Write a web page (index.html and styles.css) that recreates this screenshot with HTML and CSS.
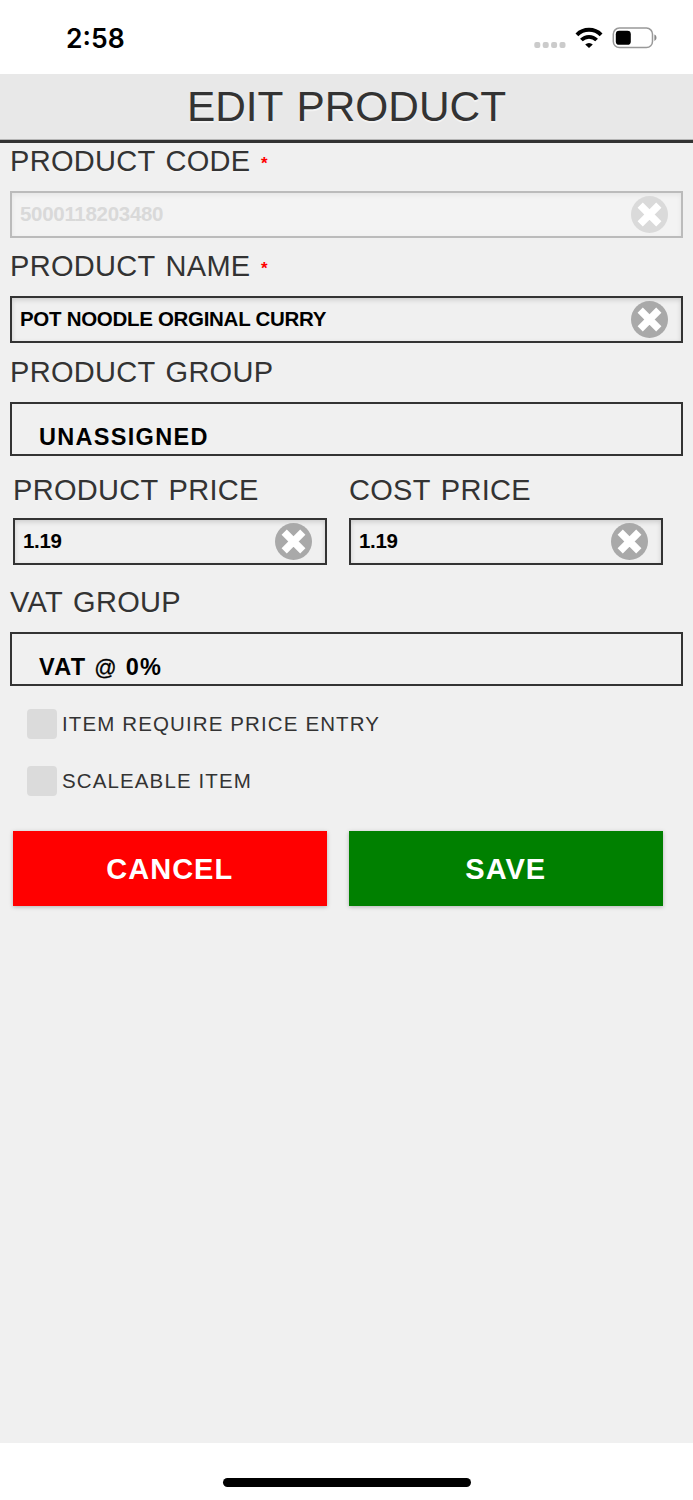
FILE: index.html
```html
<!DOCTYPE html>
<html lang="en">
<head>
<meta charset="utf-8">
<title>Edit Product</title>
<link rel="stylesheet" href="styles.css">
</head>
<body>
<svg width="0" height="0" class="defs" aria-hidden="true">
  <symbol id="clear" viewBox="0 0 37 37">
    <circle cx="18.5" cy="18.5" r="18.5" fill="currentColor"/>
    <path d="M9.2 9.2 27.8 27.8M27.8 9.2 9.2 27.8" stroke="#fff" stroke-width="7.4" fill="none"/>
  </symbol>
</svg>
<div class="status">
  <span class="time">2:58</span>
  <div class="status-icons">
    <svg width="32" height="8" viewBox="0 0 32 8" class="signal" fill="#cbcbcb"><rect x="0.3" y="1" width="6" height="6" rx="2"/><rect x="8.7" y="1" width="6" height="6" rx="2"/><rect x="17.1" y="1" width="6" height="6" rx="2"/><rect x="25.5" y="1" width="6" height="6" rx="2"/></svg>
    <svg width="28" height="22" viewBox="0 0 28 22" class="wifi" fill="none" stroke="#000"><path d="M1.9 7.8A17.2 17.2 0 0 1 26.1 7.8" stroke-width="4"/><path d="M6.4 13A10.6 10.6 0 0 1 21.6 13" stroke-width="3.8"/><path d="M14 21 10.2 17.4A5.5 5.5 0 0 1 17.8 17.4Z" fill="#000" stroke="none"/></svg>
    <svg width="46" height="22" viewBox="0 0 46 22" class="battery"><rect x="1.3" y="1.1" width="39.2" height="19.4" rx="6" fill="none" stroke="#999" stroke-width="1.5"/><rect x="3.8" y="3.8" width="15" height="14" rx="3.4"/><path d="M42.4 7.6C45.2 8.8 45.2 12.8 42.4 14Z" fill="#888"/></svg>
  </div>
</div>
<header class="title-bar"><h1>EDIT PRODUCT</h1></header>
<main class="form">
  <div class="field">
    <label class="label">PRODUCT CODE <span class="required">*</span></label>
    <div class="input input-disabled"><span class="value">5000118203480</span><svg class="clear"><use href="#clear"/></svg></div>
  </div>
  <div class="field">
    <label class="label">PRODUCT NAME <span class="required">*</span></label>
    <div class="input"><span class="value">POT NOODLE ORGINAL CURRY</span><svg class="clear"><use href="#clear"/></svg></div>
  </div>
  <div class="field group">
    <label class="label">PRODUCT GROUP</label>
    <div class="select">UNASSIGNED</div>
  </div>
  <div class="columns prices">
    <div class="field">
      <label class="label">PRODUCT PRICE</label>
      <div class="input"><span class="value">1.19</span><svg class="clear"><use href="#clear"/></svg></div>
    </div>
    <div class="field">
      <label class="label">COST PRICE</label>
      <div class="input"><span class="value">1.19</span><svg class="clear"><use href="#clear"/></svg></div>
    </div>
  </div>
  <div class="field vat">
    <label class="label">VAT GROUP</label>
    <div class="select">VAT <span class="at">@</span> 0%</div>
  </div>
  <div class="checks">
    <label class="check"><span class="box"></span>ITEM REQUIRE PRICE ENTRY</label>
    <label class="check"><span class="box"></span>SCALEABLE ITEM</label>
  </div>
  <div class="columns actions">
    <button class="button cancel">CANCEL</button>
    <button class="button save">SAVE</button>
  </div>
</main>
<footer class="home"><div class="home-bar"></div></footer>
</body>
</html>
```
FILE: styles.css
```css
* { box-sizing: border-box; }
body {
  margin: 0;
  height: 1500px;
  display: flex;
  flex-direction: column;
  background: #f0f0f0;
  color: #333;
  font-family: "Liberation Sans", Arial, sans-serif;
}
.defs { position: absolute; }
.status {
  height: 74px;
  flex: none;
  background: #fff;
  display: flex;
  justify-content: space-between;
  padding: 22px 35.5px 0 66px;
}
.time {
  font: 600 26.5px/32px Inter, sans-serif;
  color: #000;
}
.status-icons { display: flex; align-items: flex-start; }
.signal { margin: 19px 9px 0 0; }
.wifi { margin: 5px 9px 0 0; }
.battery { margin-top: 5px; }
.title-bar {
  height: 69px;
  flex: none;
  background: #e8e8e8;
  border-bottom: 3px solid #333;
  box-shadow: inset 0 -1px #b5b5b5;
}
h1 {
  margin: 0;
  font-weight: 400;
  font-size: 42.4px;
  line-height: 48px;
  padding-top: 9px;
  text-align: center;
  word-spacing: 2px;
  text-shadow: 0 2px 0 #f3f3f3;
}
.form { flex: 1; padding: 2px 10px 0; }
.field { display: flex; flex-direction: column; gap: 13px; margin-bottom: 12px; }
.label {
  font-size: 29px;
  line-height: 33px;
  height: 33px;
  letter-spacing: .3px;
  word-spacing: 2.2px;
  white-space: nowrap;
  text-shadow: 0 2px 0 #f3f3f3;
}
.required { color: red; font-size: 17px; font-weight: 700; line-height: 17px; vertical-align: 2px; text-shadow: none; }
.input {
  height: 47px;
  border: 2px solid #333;
  box-shadow: inset 0 2px 5px rgba(0,0,0,.15);
  display: flex;
  align-items: center;
  justify-content: space-between;
  padding: 0 13px 0 8px;
}
.value {
  font-weight: 700;
  font-size: 20.5px;
  line-height: 24px;
  letter-spacing: -.3px;
  padding-bottom: 2px;
  color: #000;
}
.clear { width: 37px; height: 37px; color: #a9a9a9; }
.input-disabled {
  border-color: #bbb;
  background: #f3f3f3;
  box-shadow: inset 0 2px 5px rgba(0,0,0,.06);
}
.input-disabled .value { color: #d9d9d9; }
.input-disabled .clear { color: #dadada; }
.select {
  height: 54px;
  border: 2px solid #333;
  padding: 19px 0 0 27px;
  font-weight: 700;
  font-size: 23.5px;
  line-height: 28px;
  letter-spacing: 1.3px;
  color: #000;
}
.at { font-weight: 400; font-size: 22px; line-height: 20px; -webkit-text-stroke: .3px #000; }
.group, .vat { padding-top: 1px; }
.columns { display: grid; grid-template-columns: 313.5px 313.5px; gap: 22.5px; padding-left: 3px; }
.prices { padding-top: 6px; }
.prices .field { gap: 11px; margin: 0; }
.vat { margin-top: 20px; margin-bottom: 0; }
.checks { padding: 23px 0 0 16.5px; display: grid; gap: 26.5px; }
.check {
  display: flex;
  align-items: center;
  gap: 5px;
  height: 30px;
  font-size: 20.5px;
  letter-spacing: 1.12px;
}
.box { width: 30.5px; height: 30px; border-radius: 4px; background: #dbdbdb; }
.actions { margin-top: 35.5px; }
.button {
  height: 75px;
  border: 0;
  padding: 2px 0 0;
  color: #fff;
  font: 700 29px/33px "Liberation Sans", Arial, sans-serif;
  letter-spacing: 1px;
  box-shadow: 0 1px 4px rgba(0,0,0,.25);
}
.cancel { background: #f00; }
.save { background: #008000; }
.home {
  height: 57px;
  flex: none;
  background: #fff;
  display: flex;
  justify-content: center;
  padding-top: 35px;
}
.home-bar { width: 248px; height: 8.5px; border-radius: 5px; background: #000; }
```
